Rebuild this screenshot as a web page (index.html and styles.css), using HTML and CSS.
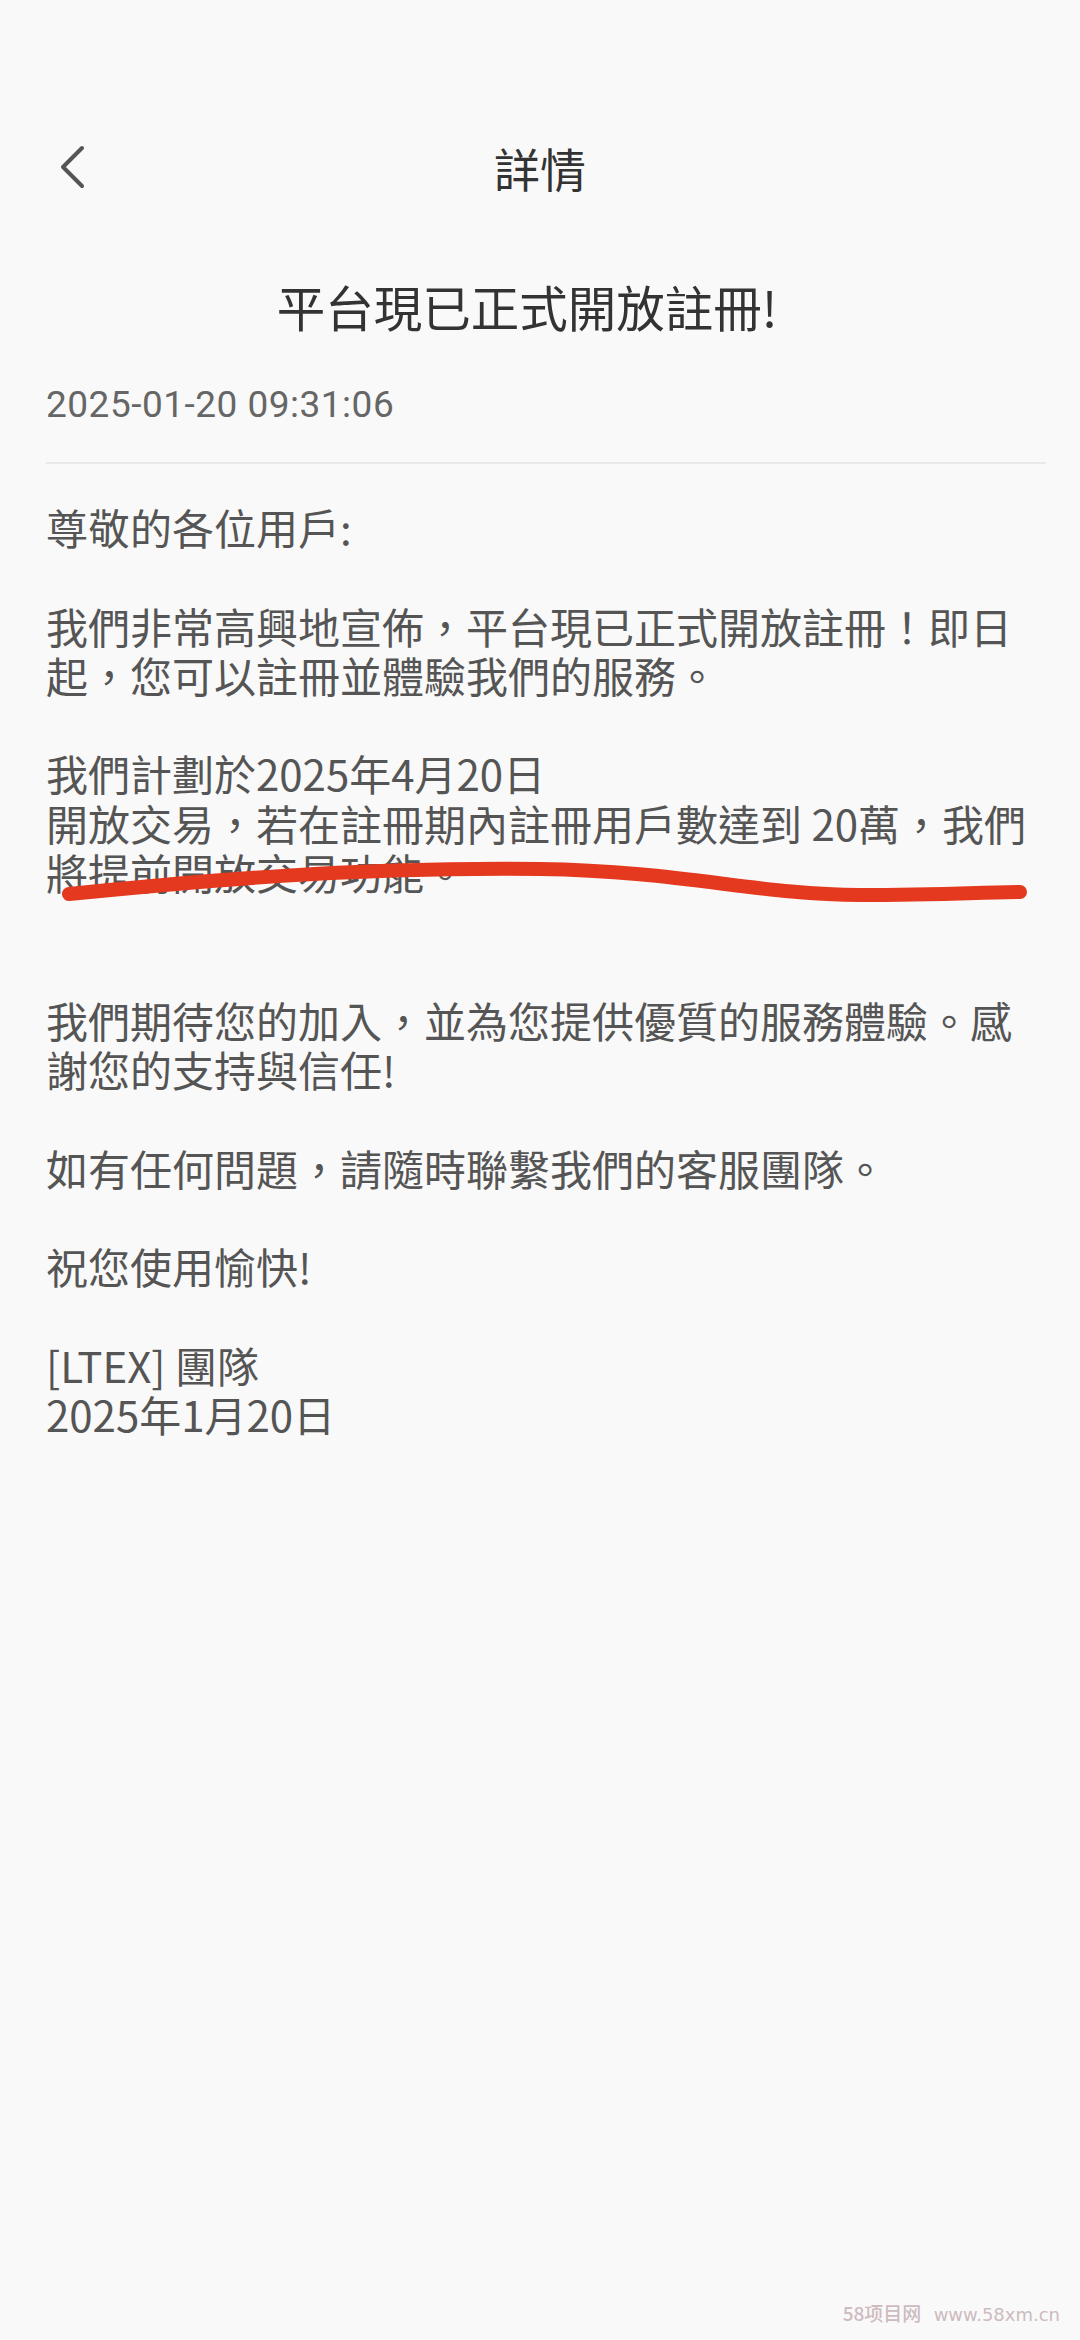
FILE: index.html
```html
<!DOCTYPE html>
<html lang="zh-Hant">
<head>
<meta charset="utf-8">
<title>詳情</title>
<link rel="stylesheet" href="styles.css">
</head>
<body>
<div class="page">
  <header class="nav">
    <div class="nav-left">
      <svg class="back" width="30" height="46" viewBox="0 0 30 46" aria-hidden="true">
        <path d="M23 4 L4 23 L23 42" fill="none" stroke="#555" stroke-width="4" stroke-linecap="round" stroke-linejoin="round"/>
      </svg>
    </div>
    <div class="nav-title">詳情</div>
    <div class="nav-right"></div>
  </header>

  <main class="article">
    <h1 class="headline">平台現已正式開放註冊!</h1>
    <div class="meta">2025-01-20 09:31:06</div>
    <div class="content">
      <p class="para">尊敬的各位用戶:</p>
      <p class="para">我們非常高興地宣佈，平台現已正式開放註冊！即日起，您可以註冊並體驗我們的服務。</p>
      <p class="para para-wide">我們計劃於2025年4月20日<br>開放交易，若在註冊期內註冊用戶數達到 20萬，我們將提前開放交易功能。</p>
      <p class="para">我們期待您的加入，並為您提供優質的服務體驗。感謝您的支持與信任!</p>
      <p class="para">如有任何問題，請隨時聯繫我們的客服團隊。</p>
      <p class="para">祝您使用愉快!</p>
      <p class="para para-last">[LTEX] 團隊<br>2025年1月20日</p>
    </div>
  </main>

  <svg class="scribble" width="1080" height="1000" viewBox="0 0 1080 1000" aria-hidden="true">
    <path d="M69 894 C 200 881, 350 867, 540 869 C 680 871, 760 895, 860 895 C 940 895, 990 892, 1020 892" fill="none" stroke="#e5391f" stroke-width="14" stroke-linecap="round"/>
  </svg>

  <div class="watermark">58项目网 <span class="wm-url">www.58xm.cn</span></div>
</div>
</body>
</html>
```

FILE: styles.css
```css
html, body {
  margin: 0;
  padding: 0;
  background: #f9f9f9;
}

body {
  font-family: "Noto Sans CJK SC", "Noto Sans CJK TC", "Noto Sans", sans-serif;
  color: #555;
}

.page {
  position: relative;
  width: 1080px;
  min-height: 2340px;
  padding-top: 117px;
  box-sizing: border-box;
}

.nav {
  display: grid;
  grid-template-columns: 1fr auto 1fr;
  align-items: center;
  height: 100px;
}

.nav-left {
  display: flex;
  align-items: center;
  padding-left: 59px;
}

.back {
  display: block;
}

.nav-title {
  font-size: 46px;
  line-height: 100px;
  color: #333;
}

.article {
  padding: 0 40px 0 46px;
}

.headline {
  margin: 59px -14px 0 -46px;
  font-size: 48.5px;
  line-height: 60px;
  font-weight: 400;
  color: #333;
  text-align: center;
}

.meta {
  margin-top: 47px;
  font-family: Roboto, "Noto Sans", sans-serif;
  font-size: 37px;
  letter-spacing: 0.5px;
  line-height: 44px;
  color: #666;
  padding-bottom: 35px;
  border-bottom: 2px solid #e8e8e8;
  margin-right: -6px;
}

.content {
  padding-top: 38px;
  font-size: 42px;
  line-height: 49.3px;
  color: #555;
}

.para {
  margin: 0 0 49.3px 0;
}

.para-wide {
  margin-bottom: 98.6px;
}

.para-last {
  margin-bottom: 0;
}

.scribble {
  position: absolute;
  left: 0;
  top: 0;
  pointer-events: none;
}

.watermark {
  position: absolute;
  right: 20px;
  top: 2299px;
  font-family: "Noto Sans CJK SC", sans-serif;
  font-size: 19px;
  font-weight: 500;
  line-height: 28px;
  color: #cdbbc0;
}

.wm-url {
  margin-left: 8px;
  font-family: "DejaVu Sans", sans-serif;
  font-size: 18px;
  font-weight: 400;
}
```
